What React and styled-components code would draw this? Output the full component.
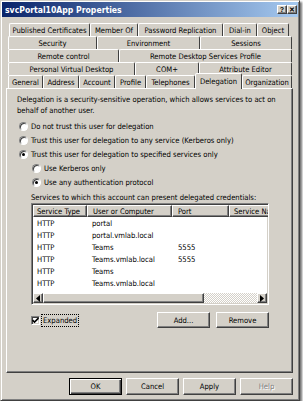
import React from "react";
import styled, { createGlobalStyle, css } from "styled-components";

const GlobalStyle = createGlobalStyle`
  html, body {
    margin: 0;
    padding: 0;
    background: #fff;
  }
  body {
    font-family: "DejaVu Sans Condensed", "DejaVu Sans", sans-serif;
    font-stretch: condensed;
    font-size: 7.6px;
    color: #000;
  }
`;

const face = "#d4d0c8";

const raised = css`
  border: 1px solid;
  border-color: #fff #404040 #404040 #fff;
  box-shadow: inset -1px -1px 0 #808080;
`;

const sunken = css`
  border: 1px solid;
  border-color: #808080 #fff #fff #808080;
  box-shadow: inset 1px 1px 0 #404040, inset -1px -1px 0 ${face};
`;

const Window = styled.div`
  box-sizing: border-box;
  width: 300px;
  height: 401px;
  background: ${face};
  border: 1px solid;
  border-color: ${face} #404040 #404040 ${face};
  box-shadow: inset 1px 1px 0 #fff, inset -1px -1px 0 #808080,
    2px 2px 2px rgba(0, 0, 0, 0.55);
  padding: 1px;
  display: flex;
  flex-direction: column;
`;

const TitleBar = styled.div`
  height: 15px;
  background: linear-gradient(to right, #0a246a, #a6caf0);
  display: flex;
  align-items: center;
  justify-content: space-between;
  padding: 0 1px 0 3px;
`;

const Title = styled.span`
  color: #fff;
  font-weight: bold;
  font-size: 8.6px;
  white-space: nowrap;
`;

const CaptionButtons = styled.div`
  display: flex;
`;

const CaptionButton = styled.div`
  box-sizing: border-box;
  width: 10px;
  height: 9px;
  background: ${face};
  ${raised};
  display: flex;
  align-items: center;
  justify-content: center;
  font-weight: bold;
  font-size: 7px;
  line-height: 1;
  font-family: "Liberation Sans", sans-serif;
`;

const TabStack = styled.div`
  margin-top: 6px;
  padding: 0 5px 0 6px;
  display: flex;
  flex-direction: column;
`;

const TabRow = styled.div`
  display: flex;
  height: 13px;
  padding-left: ${(p) => p.$indent || 0}px;
`;

const Tab = styled.div`
  box-sizing: border-box;
  flex: none;
  width: ${(p) => p.$w}px;
  height: 13px;
  border: 1px solid;
  border-bottom: none;
  border-color: #fff #404040 transparent #fff;
  border-radius: 2px 2px 0 0;
  display: flex;
  align-items: center;
  justify-content: center;
  white-space: nowrap;
  overflow: hidden;
  ${(p) =>
    p.$active &&
    css`
      position: relative;
      z-index: 1;
      height: 16px;
      margin-top: -2px;
      background: ${face};
      padding-bottom: 1px;
    `}
`;

const Panel = styled.div`
  box-sizing: border-box;
  height: 285px;
  margin: 0 5px 0 4px;
  ${raised};
  padding: 5px 0 0 10px;
  display: flex;
  flex-direction: column;
`;

const Description = styled.p`
  margin: 0;
  line-height: 11px;
  width: 266px;
`;

const RadioGroup = styled.div`
  margin-top: 3px;
  display: flex;
  flex-direction: column;
`;

const RadioRow = styled.label`
  height: 14px;
  display: flex;
  align-items: center;
  gap: 3px;
  padding-left: ${(p) => p.$indent}px;
  white-space: nowrap;
`;

const Radio = styled.span`
  box-sizing: border-box;
  width: 9px;
  height: 9px;
  border-radius: 50%;
  background: #fff;
  border: 1px solid;
  border-color: #808080 #fff #fff #808080;
  box-shadow: inset 1px 1px 0 #404040;
  display: flex;
  align-items: center;
  justify-content: center;
  &::after {
    content: "";
    width: 3px;
    height: 3px;
    border-radius: 50%;
    background: ${(p) => (p.$checked ? "#000" : "transparent")};
  }
`;

const Section = styled.div`
  margin: 3px 0 0 14px;
  width: 238px;
  display: flex;
  flex-direction: column;
`;

const Caption = styled.div`
  line-height: 11px;
  white-space: nowrap;
`;

const ListBox = styled.div`
  box-sizing: border-box;
  height: 102px;
  background: #fff;
  ${sunken};
  padding: 1px;
  display: flex;
  flex-direction: column;
  overflow: hidden;
`;

const Grid = styled.div`
  display: grid;
  grid-template-columns: 54px 85px 57px 80px;
  grid-auto-rows: 12px;
`;

const HeaderCell = styled.div`
  box-sizing: border-box;
  background: ${face};
  ${raised};
  padding-left: ${(p) => p.$pad}px;
  display: flex;
  align-items: center;
  white-space: nowrap;
  overflow: hidden;
`;

const Cell = styled.div`
  padding-left: ${(p) => p.$pad}px;
  display: flex;
  align-items: center;
  white-space: nowrap;
`;

const ListFill = styled.div`
  flex: 1;
`;

const ScrollBar = styled.div`
  height: 10px;
  display: flex;
  background-color: #eeece8;
  background-image: repeating-conic-gradient(${face} 0 25%, #fff 0 50%);
  background-size: 2px 2px;
`;

const ScrollButton = styled.div`
  box-sizing: border-box;
  width: 10px;
  height: 10px;
  background: ${face};
  ${raised};
  display: flex;
  align-items: center;
  justify-content: center;
`;

const Thumb = styled.div`
  box-sizing: border-box;
  width: 161px;
  height: 10px;
  background: ${face};
  ${raised};
`;

const Track = styled.div`
  flex: 1;
`;

const ActionRow = styled.div`
  margin-top: 7px;
  display: flex;
  align-items: center;
  height: 16px;
`;

const CheckBox = styled.span`
  box-sizing: border-box;
  width: 9px;
  height: 9px;
  background: #fff;
  ${sunken};
  display: flex;
  align-items: center;
  justify-content: center;
`;

const CheckLabel = styled.span`
  margin-left: 2px;
  padding: 0 1px;
  line-height: 11px;
  outline: 1px dotted #000;
  outline-offset: 0;
`;

const Spacer = styled.div`
  flex: 1;
`;

const Button = styled.button`
  box-sizing: border-box;
  width: 53px;
  height: ${(p) => p.$h || 16}px;
  margin: 0;
  padding: 0;
  font: inherit;
  font-stretch: condensed;
  color: ${(p) => (p.disabled ? "#808080" : "#000")};
  text-shadow: ${(p) => (p.disabled ? "1px 1px 0 #fff" : "none")};
  background: ${face};
  border: 1px solid;
  border-color: #fff #404040 #404040 #fff;
  box-shadow: inset -1px -1px 0 #808080;
  ${(p) =>
    p.$default &&
    css`
      border-color: #000;
      box-shadow: inset 1px 1px 0 #fff, inset -1px -1px 0 #404040,
        inset -2px -2px 0 #808080;
    `}
`;

const ActionButtons = styled.div`
  display: flex;
  gap: 6px;
`;

const ButtonBar = styled.div`
  margin: 5px 5px 0 0;
  display: flex;
  justify-content: flex-end;
  gap: 4px;
`;

const tabRows = [
  {
    indent: 1,
    tabs: [
      ["Published Certificates", 81],
      ["Member Of", 48],
      ["Password Replication", 85],
      ["Dial-in", 34],
      ["Object", 32],
    ],
  },
  {
    tabs: [
      ["Security", 89],
      ["Environment", 103],
      ["Sessions", 92],
    ],
  },
  {
    tabs: [
      ["Remote control", 111],
      ["Remote Desktop Services Profile", 173],
    ],
  },
  {
    tabs: [
      ["Personal Virtual Desktop", 127],
      ["COM+", 64],
      ["Attribute Editor", 93],
    ],
  },
  {
    tabs: [
      ["General", 35],
      ["Address", 36],
      ["Account", 36],
      ["Profile", 31],
      ["Telephones", 49],
      ["Delegation", 47],
      ["Organization", 50],
    ],
  },
];

const services = [
  ["HTTP", "portal", ""],
  ["HTTP", "portal.vmlab.local", ""],
  ["HTTP", "Teams", "5555"],
  ["HTTP", "Teams.vmlab.local", "5555"],
  ["HTTP", "Teams", ""],
  ["HTTP", "Teams.vmlab.local", ""],
];

const Arrow = ({ dir }) => (
  <svg width="4" height="7" viewBox="0 0 4 7">
    <path d={dir === "left" ? "M4 0 L0 3.5 L4 7 Z" : "M0 0 L4 3.5 L0 7 Z"} fill="#000" />
  </svg>
);

export default function App() {
  return (
    <>
      <GlobalStyle />
      <Window>
        <TitleBar>
          <Title>svcPortal10App Properties</Title>
          <CaptionButtons>
            <CaptionButton>?</CaptionButton>
            <CaptionButton>✕</CaptionButton>
          </CaptionButtons>
        </TitleBar>

        <TabStack>
          {tabRows.map((row, i) => (
            <TabRow key={i} $indent={row.indent}>
              {row.tabs.map(([name, w]) => (
                <Tab key={name} $w={w} $active={name === "Delegation"}>
                  {name}
                </Tab>
              ))}
            </TabRow>
          ))}
        </TabStack>

        <Panel>
          <Description>
            Delegation is a security-sensitive operation, which allows services to act on
            behalf of another user.
          </Description>

          <RadioGroup>
            <RadioRow $indent={2}>
              <Radio />
              Do not trust this user for delegation
            </RadioRow>
            <RadioRow $indent={2}>
              <Radio />
              Trust this user for delegation to any service (Kerberos only)
            </RadioRow>
            <RadioRow $indent={2}>
              <Radio $checked />
              Trust this user for delegation to specified services only
            </RadioRow>
            <RadioRow $indent={15}>
              <Radio />
              Use Kerberos only
            </RadioRow>
            <RadioRow $indent={15}>
              <Radio $checked />
              Use any authentication protocol
            </RadioRow>
          </RadioGroup>

          <Section>
            <Caption>Services to which this account can present delegated credentials:</Caption>
            <ListBox>
              <Grid>
                <HeaderCell $pad={3}>Service Type</HeaderCell>
                <HeaderCell $pad={5}>User or Computer</HeaderCell>
                <HeaderCell $pad={5}>Port</HeaderCell>
                <HeaderCell $pad={4}>Service Name</HeaderCell>
                {services.map(([type, host, port], i) => (
                  <React.Fragment key={i}>
                    <Cell $pad={4}>{type}</Cell>
                    <Cell $pad={5}>{host}</Cell>
                    <Cell $pad={6}>{port}</Cell>
                    <Cell $pad={4} />
                  </React.Fragment>
                ))}
              </Grid>
              <ListFill />
              <ScrollBar>
                <ScrollButton>
                  <Arrow dir="left" />
                </ScrollButton>
                <Thumb />
                <Track />
                <ScrollButton>
                  <Arrow dir="right" />
                </ScrollButton>
              </ScrollBar>
            </ListBox>

            <ActionRow>
              <CheckBox>
                <svg width="7" height="7" viewBox="0 0 7 7">
                  <path d="M0.5 3 L2.5 5 L6.5 1" stroke="#000" strokeWidth="1.6" fill="none" />
                </svg>
              </CheckBox>
              <CheckLabel>Expanded</CheckLabel>
              <Spacer />
              <ActionButtons>
                <Button>Add...</Button>
                <Button>Remove</Button>
              </ActionButtons>
            </ActionRow>
          </Section>
        </Panel>

        <ButtonBar>
          <Button $h={17} $default>
            OK
          </Button>
          <Button $h={17}>Cancel</Button>
          <Button $h={17}>Apply</Button>
          <Button $h={17} disabled>
            Help
          </Button>
        </ButtonBar>
      </Window>
    </>
  );
}
